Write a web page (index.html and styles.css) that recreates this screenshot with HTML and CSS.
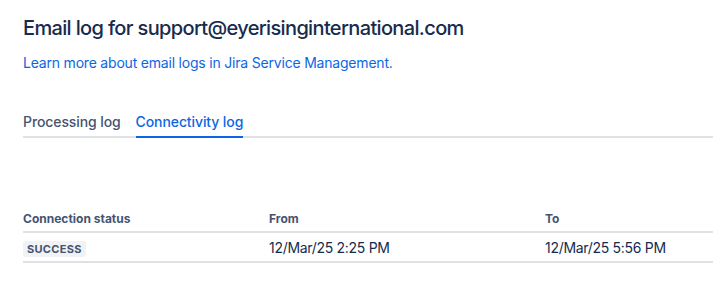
FILE: index.html
```html
<!DOCTYPE html>
<html lang="en">
<head>
    <meta charset="UTF-8">
    <title>Email log</title>
    <link rel="stylesheet" href="styles.css">
</head>
<body>
    <div class="page">
        <h1>Email log for support@eyerisinginternational.com</h1>
        <a href="#" class="learn-link">Learn more about email logs in Jira Service Management.</a>

        <div class="tabs">
            <div class="tab">Processing log</div>
            <div class="tab selected">Connectivity log</div>
        </div>

        <table class="log-table">
            <thead>
                <tr>
                    <th class="col-status">Connection status</th>
                    <th class="col-from">From</th>
                    <th>To</th>
                </tr>
            </thead>
            <tbody>
                <tr>
                    <td><span class="lozenge">Success</span></td>
                    <td>12/Mar/25 2:25 PM</td>
                    <td>12/Mar/25 5:56 PM</td>
                </tr>
            </tbody>
        </table>
    </div>
</body>
</html>
```

FILE: styles.css
```css
body {
    margin: 0;
    font-family: Inter, 'Noto Sans', sans-serif;
    color: #172b4d;
    background-color: #fff;
}

.page {
    padding: 16px 0 0 23px;
}

h1 {
    margin: 0;
    font-size: 20px;
    font-weight: 500;
    line-height: 24px;
    letter-spacing: -0.65px;
    color: #172b4d;
}

.learn-link {
    display: block;
    margin-top: 13px;
    font-size: 14px;
    line-height: 20px;
    letter-spacing: -0.2px;
    color: #0c66e4;
    text-decoration: none;
}

.tabs {
    display: flex;
    gap: 15px;
    margin-top: 39px;
    border-bottom: 2px solid #dfe1e6;
}

.tab {
    font-size: 14px;
    font-weight: 500;
    line-height: 20px;
    padding: 0 0 4px;
    color: #44546f;
    letter-spacing: -0.1px;
    margin-bottom: -2px;
    border-bottom: 2px solid transparent;
}

.tab.selected {
    color: #0c66e4;
    border-bottom-color: #0c66e4;
}

.log-table {
    width: 100%;
    margin-top: 69px;
    border-collapse: collapse;
    font-size: 14px;
}

.log-table th {
    text-align: left;
    font-size: 12px;
    font-weight: 700;
    color: #44546f;
    padding: 4px 0 5px;
    border-bottom: 2px solid #dfe1e6;
}

.log-table td {
    padding: 5px 0 3px;
    color: #172b4d;
    border-bottom: 2px solid #dfe1e6;
    line-height: 20px;
    letter-spacing: -0.3px;
}

.col-status {
    width: 246px;
}

.col-from {
    width: 276px;
}

.lozenge {
    display: inline-block;
    padding: 0 4px;
    border-radius: 3px;
    background-color: #f1f2f4;
    color: #44546f;
    font-size: 11px;
    font-weight: 700;
    line-height: 16px;
    text-transform: uppercase;
    letter-spacing: 0.3px;
}
```
